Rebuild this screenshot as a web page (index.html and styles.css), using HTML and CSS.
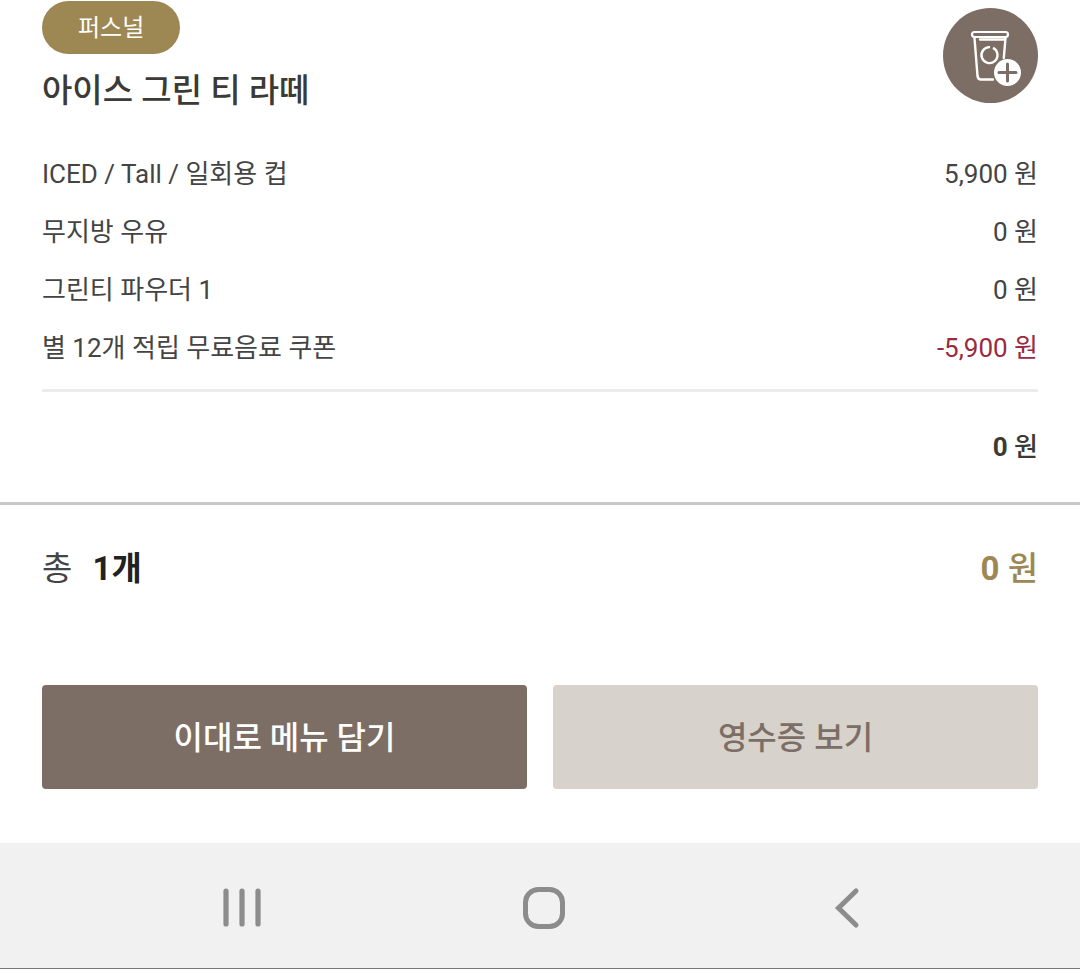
FILE: index.html
```html
<!DOCTYPE html>
<html lang="ko">
<head>
    <meta charset="UTF-8">
    <meta name="viewport" content="width=device-width, initial-scale=1.0">
    <title>주문 내역</title>
    <link rel="stylesheet" href="styles.css">
</head>
<body>
    <main class="order">
        <section class="item">
            <div class="item-header">
                <div>
                    <span class="badge">퍼스널</span>
                    <h2>아이스 그린 티 라떼</h2>
                </div>
                <button type="button" class="cup-button" aria-label="메뉴 담기">
                    <svg viewBox="0 0 95 95" fill="none" stroke="#fff" stroke-linecap="round" stroke-linejoin="round">
                        <rect x="29" y="24" width="36" height="5" rx="2.5" stroke-width="2.2"/>
                        <path d="M31.500 30L34.500 68Q35 71.500 38 71.500H50M62.500 30L60.800 50M37 31.500H61" stroke-width="2.4"/>
                        <path d="M50 39.900A8 8 0 1 1 47 39.100" stroke-width="2.4" stroke-linecap="butt"/>
                        <circle cx="64.500" cy="64.500" r="13.500" fill="#fff" stroke="none"/>
                        <path d="M64.500 56V73M56 64.500H73" stroke="#7d6e65" stroke-width="3"/>
                    </svg>
                </button>
            </div>
            <dl class="options">
                <div class="row"><dt>ICED / Tall / 일회용 컵</dt><dd>5,900 원</dd></div>
                <div class="row"><dt>무지방 우유</dt><dd>0 원</dd></div>
                <div class="row"><dt>그린티 파우더 1</dt><dd>0 원</dd></div>
                <div class="row"><dt>별 12개 적립 무료음료 쿠폰</dt><dd class="discount">-5,900 원</dd></div>
            </dl>
            <p class="subtotal"><b>0</b> 원</p>
        </section>
        <section class="total">
            <p class="count">총 <strong>1개</strong></p>
            <p class="price"><b>0</b> 원</p>
        </section>
        <div class="actions">
            <button type="button" class="btn btn-primary">이대로 메뉴 담기</button>
            <button type="button" class="btn btn-secondary">영수증 보기</button>
        </div>
    </main>
    <nav class="navbar">
        <button type="button" aria-label="최근 앱">
            <svg viewBox="0 0 44 44" fill="none" stroke="#8c8c8c" stroke-width="5.200" stroke-linecap="round">
                <path d="M6 5V38M22 5V38M38 5V38"/>
            </svg>
        </button>
        <button type="button" aria-label="홈">
            <svg viewBox="0 0 44 44" fill="none" stroke="#8c8c8c" stroke-width="5">
                <rect x="3.500" y="3.500" width="37" height="37" rx="13"/>
            </svg>
        </button>
        <button type="button" aria-label="뒤로">
            <svg viewBox="0 0 44 44" fill="none" stroke="#8c8c8c" stroke-width="5" stroke-linecap="round">
                <path d="M32 5L14.500 22L32 39"/>
            </svg>
        </button>
    </nav>
</body>
</html>
```
FILE: styles.css
```css
* {
    box-sizing: border-box;
}
body {
    margin: 0;
    min-height: 100vh;
    display: flex;
    flex-direction: column;
    background-color: #fff;
    color: #444;
    font-family: Roboto, "Noto Sans CJK KR", sans-serif;
    font-size: 26px;
    line-height: 58px;
}
h2, p, dl, dd {
    margin: 0;
}
button {
    padding: 0;
    border: none;
    background: none;
    font-family: inherit;
    cursor: pointer;
}
svg {
    display: block;
    width: 100%;
    height: 100%;
}
.order {
    flex: 1;
}
.item {
    padding: 1px 42px 26px;
    border-bottom: 3px solid #c8c8c8;
}
.item-header {
    display: flex;
    justify-content: space-between;
    align-items: flex-start;
}
.badge {
    display: block;
    width: fit-content;
    padding: 2px 36px 0;
    border-radius: 27px;
    background-color: #9d8854;
    color: #fff;
    font-size: 24px;
    line-height: 51px;
}
h2 {
    margin-top: 13px;
    color: #3c3a36;
    font-size: 33px;
    font-weight: 500;
    line-height: 48px;
}
.cup-button {
    width: 95px;
    height: 95px;
    margin-top: 7px;
    border-radius: 50%;
    background-color: #7d6e65;
}
.options {
    padding: 30px 0 12px;
    border-bottom: 3px solid #ececec;
}
.row {
    display: flex;
    justify-content: space-between;
}
.discount {
    color: #9b2a40;
}
.subtotal {
    margin-top: 26px;
    color: #3c3a33;
    font-weight: 500;
    text-align: right;
}
.total {
    display: flex;
    justify-content: space-between;
    padding: 35px 42px 0;
    font-size: 33px;
}
.count strong {
    margin-left: 12px;
    color: #222;
    font-weight: 700;
}
.price {
    color: #9d8854;
    font-weight: 500;
}
.actions {
    display: flex;
    gap: 26px;
    padding: 87px 42px 53px;
}
.btn {
    flex: 1;
    height: 104px;
    padding-bottom: 4px;
    border-radius: 4px;
    font-size: 32px;
    font-weight: 500;
}
.btn-primary {
    background-color: #7d6e65;
    color: #fff;
}
.btn-secondary {
    background-color: #d7d2cc;
    color: #7d6e65;
}
.navbar {
    display: flex;
    justify-content: center;
    gap: 258px;
    padding: 43px 0 38px 8px;
    border-bottom: 1px solid #777;
    background-color: #f1f1f1;
}
.navbar button {
    width: 44px;
    height: 44px;
}
```
